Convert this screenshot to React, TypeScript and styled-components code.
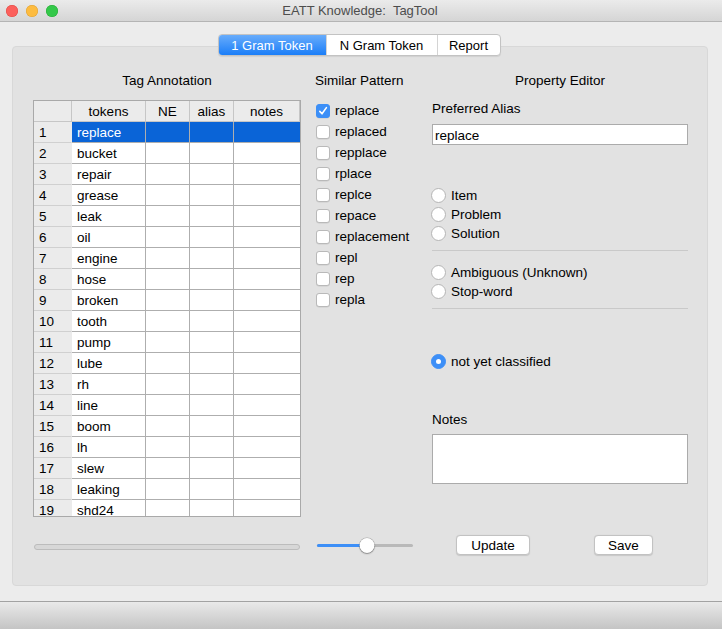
import React from 'react';
import styled, { createGlobalStyle, css } from 'styled-components';

const GlobalStyle = createGlobalStyle`
  html, body {
    margin: 0;
    padding: 0;
    background: #ececec;
  }
  body {
    font-family: "Liberation Sans", Arial, sans-serif;
    font-size: 13px;
    color: #000;
  }
`;

const tokens = [
  'replace', 'bucket', 'repair', 'grease', 'leak', 'oil', 'engine', 'hose', 'broken', 'tooth',
  'pump', 'lube', 'rh', 'line', 'boom', 'lh', 'slew', 'leaking', 'shd24',
];

const patterns = [
  'replace', 'replaced', 'repplace', 'rplace', 'replce', 'repace', 'replacement', 'repl', 'rep', 'repla',
];

const Window = styled.div`
  width: 722px;
  height: 629px;
  display: flex;
  flex-direction: column;
  background: #ececec;
  overflow: hidden;
`;

const TitleBar = styled.div`
  height: 22px;
  flex: none;
  position: relative;
  display: flex;
  align-items: center;
  justify-content: center;
  background: linear-gradient(#ebebeb, #d5d5d5);
  border-bottom: 1px solid #b4b4b4;
  box-sizing: border-box;
`;

const Lights = styled.div`
  position: absolute;
  left: 6px;
  top: 5px;
  display: flex;
  gap: 8px;
`;

const Light = styled.span<{ $color: string; $edge: string }>`
  width: 12px;
  height: 12px;
  border-radius: 50%;
  background: ${({ $color }) => $color};
  box-shadow: inset 0 0 0 0.5px ${({ $edge }) => $edge};
`;

const Title = styled.div`
  color: #4d4d4d;
  white-space: pre;
  font-size: 13px;
  margin-left: -2px;
`;

const Body = styled.div`
  flex: 1;
  padding: 12px 14px 15px 12px;
  display: flex;
  flex-direction: column;
`;

const Tabs = styled.div`
  align-self: center;
  display: flex;
  margin-left: -2px;
  margin-bottom: -10px;
  position: relative;
  z-index: 1;
  border: 1px solid #c3c3c3;
  border-radius: 4px;
  background: #fff;
  box-shadow: 0 1px 1px rgba(0, 0, 0, 0.08);
  overflow: hidden;
`;

const Tab = styled.div<{ $active?: boolean; $width: number }>`
  width: ${({ $width }) => $width}px;
  height: 20px;
  display: flex;
  align-items: center;
  justify-content: center;
  font-size: 13px;
  & + & {
    border-left: 1px solid #d4d4d4;
  }
  ${({ $active }) =>
    $active &&
    css`
      background: linear-gradient(#68acfb, #1b7ef8);
      color: #fff;
    `}
`;

const Panel = styled.div`
  height: 540px;
  box-sizing: border-box;
  background: #e2e2e2;
  border: 1px solid #d8d8d8;
  border-radius: 4px;
  padding: 26px 19px 0 20px;
  font-size: 13.5px;
  display: grid;
  grid-template-columns: 268px 103px 256px;
  grid-template-rows: 16px 417px 28px;
  column-gap: 14px;
  row-gap: 11px;
`;

const Heading = styled.div<{ $align?: string }>`
  line-height: 16px;
  white-space: nowrap;
  text-align: ${({ $align }) => $align || 'center'};
`;

const Table = styled.div`
  border: 1px solid #a9a9a9;
  background: #fff;
  overflow: hidden;
  display: grid;
  grid-template-columns: 38px 74px 44px 44px 66px;
  grid-auto-rows: 21px;
  align-content: start;
  height: 417px;
  box-sizing: border-box;
`;

const HeadCell = styled.div`
  background: #ebebeb;
  border-right: 1px solid #c6c6c6;
  border-bottom: 1px solid #c6c6c6;
  display: flex;
  align-items: center;
  justify-content: center;
  &:last-child {
    border-right: none;
  }
`;

const NumCell = styled.div`
  background: #ebebeb;
  border-bottom: 1px solid #d0d0d0;
  border-right: 1px solid #ebebeb;
  padding-left: 5px;
  display: flex;
  align-items: center;
`;

const Cell = styled.div<{ $selected?: boolean; $last?: boolean }>`
  border-right: ${({ $last }) => ($last ? 'none' : '1px solid #aeaeae')};
  border-bottom: 1px solid #aeaeae;
  padding-left: 5px;
  display: flex;
  align-items: center;
  background: ${({ $selected }) => ($selected ? '#0a64d7' : '#fff')};
  color: ${({ $selected }) => ($selected ? '#fff' : '#000')};
  white-space: nowrap;
`;

const PatternList = styled.div`
  display: flex;
  flex-direction: column;
`;

const CheckRow = styled.label`
  height: 21px;
  display: flex;
  align-items: center;
  gap: 5px;
  padding-left: 1px;
  white-space: nowrap;
`;

const Box = styled.span<{ $checked?: boolean }>`
  width: 14px;
  height: 14px;
  flex: none;
  box-sizing: border-box;
  border-radius: 3px;
  display: flex;
  align-items: center;
  justify-content: center;
  background: ${({ $checked }) => ($checked ? '#3c8ff7' : '#fff')};
  border: 1px solid ${({ $checked }) => ($checked ? '#3c8ff7' : '#b9b9b9')};
  box-shadow: 0 0.5px 0.5px rgba(0, 0, 0, 0.1);
`;

const Editor = styled.div`
  display: flex;
  flex-direction: column;
`;

const Label = styled.div<{ $gap?: number }>`
  line-height: 16px;
  margin-top: ${({ $gap }) => $gap || 0}px;
`;

const TextInput = styled.div`
  margin-top: 7px;
  height: 21px;
  box-sizing: border-box;
  border: 1px solid #ababab;
  background: #fff;
  padding: 1px 0 0 2px;
  display: flex;
  align-items: center;
`;

const NotesBox = styled.div`
  margin-top: 6px;
  height: 50px;
  box-sizing: border-box;
  border: 1px solid #ababab;
  background: #fff;
`;

const RadioGroup = styled.div<{ $gap: number }>`
  margin-top: ${({ $gap }) => $gap}px;
  display: flex;
  flex-direction: column;
`;

const RadioRow = styled.label`
  height: 19px;
  display: flex;
  align-items: center;
  gap: 5px;
  margin-left: -1px;
`;

const RadioDot = styled.span<{ $on?: boolean }>`
  width: 15px;
  height: 15px;
  flex: none;
  box-sizing: border-box;
  border-radius: 50%;
  display: flex;
  align-items: center;
  justify-content: center;
  background: ${({ $on }) => ($on ? '#3d8ff7' : '#fff')};
  border: 1px solid ${({ $on }) => ($on ? '#3d8ff7' : '#b5b5b5')};
  &::after {
    content: '';
    display: ${({ $on }) => ($on ? 'block' : 'none')};
    width: 5px;
    height: 5px;
    border-radius: 50%;
    background: #fff;
  }
`;

const Separator = styled.div<{ $gap: number }>`
  margin-top: ${({ $gap }) => $gap}px;
  height: 1px;
  background: #c9c9c9;
`;

const ScrollTrack = styled.div`
  margin: 16px 1px 0 1px;
  height: 6px;
  border-radius: 3px;
  background: #d7d7d7;
  border: 1px solid #bcbcbc;
  box-sizing: border-box;
  align-self: start;
`;

const Slider = styled.div`
  position: relative;
  height: 21px;
  width: 96px;
  margin: 7px 0 0 2px;
  display: flex;
  align-items: center;
`;

const SliderTrack = styled.div`
  height: 3px;
  width: 100%;
  border-radius: 2px;
  background: #b9b9b9;
  display: flex;
`;

const SliderFill = styled.div`
  height: 100%;
  border-radius: 2px;
  background: #3d8ff7;
`;

const Thumb = styled.span`
  position: absolute;
  top: 3px;
  width: 15px;
  height: 15px;
  border-radius: 50%;
  background: #fff;
  box-shadow: 0 0 0 0.5px rgba(0, 0, 0, 0.25), 0 1px 1.5px rgba(0, 0, 0, 0.3);
  transform: translateX(-50%);
`;

const ButtonRow = styled.div`
  display: flex;
  align-items: flex-start;
  gap: 64px;
  margin-top: 7px;
  padding-left: 24px;
`;

const Button = styled.button<{ $width: number }>`
  width: ${({ $width }) => $width}px;
  height: 20px;
  padding: 0;
  font-family: inherit;
  font-size: 13.5px;
  color: #000;
  background: #fff;
  border: 1px solid #c2c2c2;
  border-radius: 4px;
  box-shadow: 0 0.5px 1px rgba(0, 0, 0, 0.12);
`;

const BottomBar = styled.div`
  height: 28px;
  flex: none;
  border-top: 1px solid #a2a2a2;
  background: linear-gradient(#e9e9e9, #c3c3c3);
`;

const Check = () => (
  <svg width="10" height="10" viewBox="0 0 10 10">
    <path d="M1.8 5.4 L4 7.8 L8.4 1.6" fill="none" stroke="#fff" strokeWidth="1.6" strokeLinecap="round" strokeLinejoin="round" />
  </svg>
);

const Radio: React.FC<{ label: string; on?: boolean }> = ({ label, on }) => (
  <RadioRow>
    <RadioDot $on={on} />
    {label}
  </RadioRow>
);

const sliderValue = 0.52;

const App: React.FC = () => (
  <>
    <GlobalStyle />
    <Window>
      <TitleBar>
        <Lights>
          <Light $color="#fc605c" $edge="#de4a44" />
          <Light $color="#fdbc40" $edge="#dea034" />
          <Light $color="#34c84a" $edge="#27aa35" />
        </Lights>
        <Title>EATT Knowledge:  TagTool</Title>
      </TitleBar>
      <Body>
        <Tabs>
          <Tab $active $width={107}>1 Gram Token</Tab>
          <Tab $width={110}>N Gram Token</Tab>
          <Tab $width={62}>Report</Tab>
        </Tabs>
        <Panel>
          <Heading>Tag Annotation</Heading>
          <Heading $align="left">Similar Pattern</Heading>
          <Heading>Property Editor</Heading>

          <Table>
            <HeadCell />
            <HeadCell>tokens</HeadCell>
            <HeadCell>NE</HeadCell>
            <HeadCell>alias</HeadCell>
            <HeadCell>notes</HeadCell>
            {tokens.map((t, i) => (
              <React.Fragment key={t}>
                <NumCell>{i + 1}</NumCell>
                <Cell $selected={i === 0}>{t}</Cell>
                <Cell $selected={i === 0} />
                <Cell $selected={i === 0} />
                <Cell $selected={i === 0} $last />
              </React.Fragment>
            ))}
          </Table>

          <PatternList>
            {patterns.map((p, i) => (
              <CheckRow key={p}>
                <Box $checked={i === 0}>{i === 0 && <Check />}</Box>
                {p}
              </CheckRow>
            ))}
          </PatternList>

          <Editor>
            <Label $gap={1}>Preferred Alias</Label>
            <TextInput>replace</TextInput>
            <RadioGroup $gap={41}>
              <Radio label="Item" />
              <Radio label="Problem" />
              <Radio label="Solution" />
            </RadioGroup>
            <Separator $gap={7} />
            <RadioGroup $gap={12}>
              <Radio label="Ambiguous (Unknown)" />
              <Radio label="Stop-word" />
            </RadioGroup>
            <Separator $gap={7} />
            <RadioGroup $gap={43}>
              <Radio label="not yet classified" on />
            </RadioGroup>
            <Label $gap={41}>Notes</Label>
            <NotesBox />
          </Editor>

          <ScrollTrack />
          <Slider>
            <SliderTrack>
              <SliderFill style={{ width: `${sliderValue * 100}%` }} />
            </SliderTrack>
            <Thumb style={{ left: `${sliderValue * 100}%` }} />
          </Slider>
          <ButtonRow>
            <Button $width={74}>Update</Button>
            <Button $width={59}>Save</Button>
          </ButtonRow>
        </Panel>
      </Body>
      <BottomBar />
    </Window>
  </>
);

export default App;
